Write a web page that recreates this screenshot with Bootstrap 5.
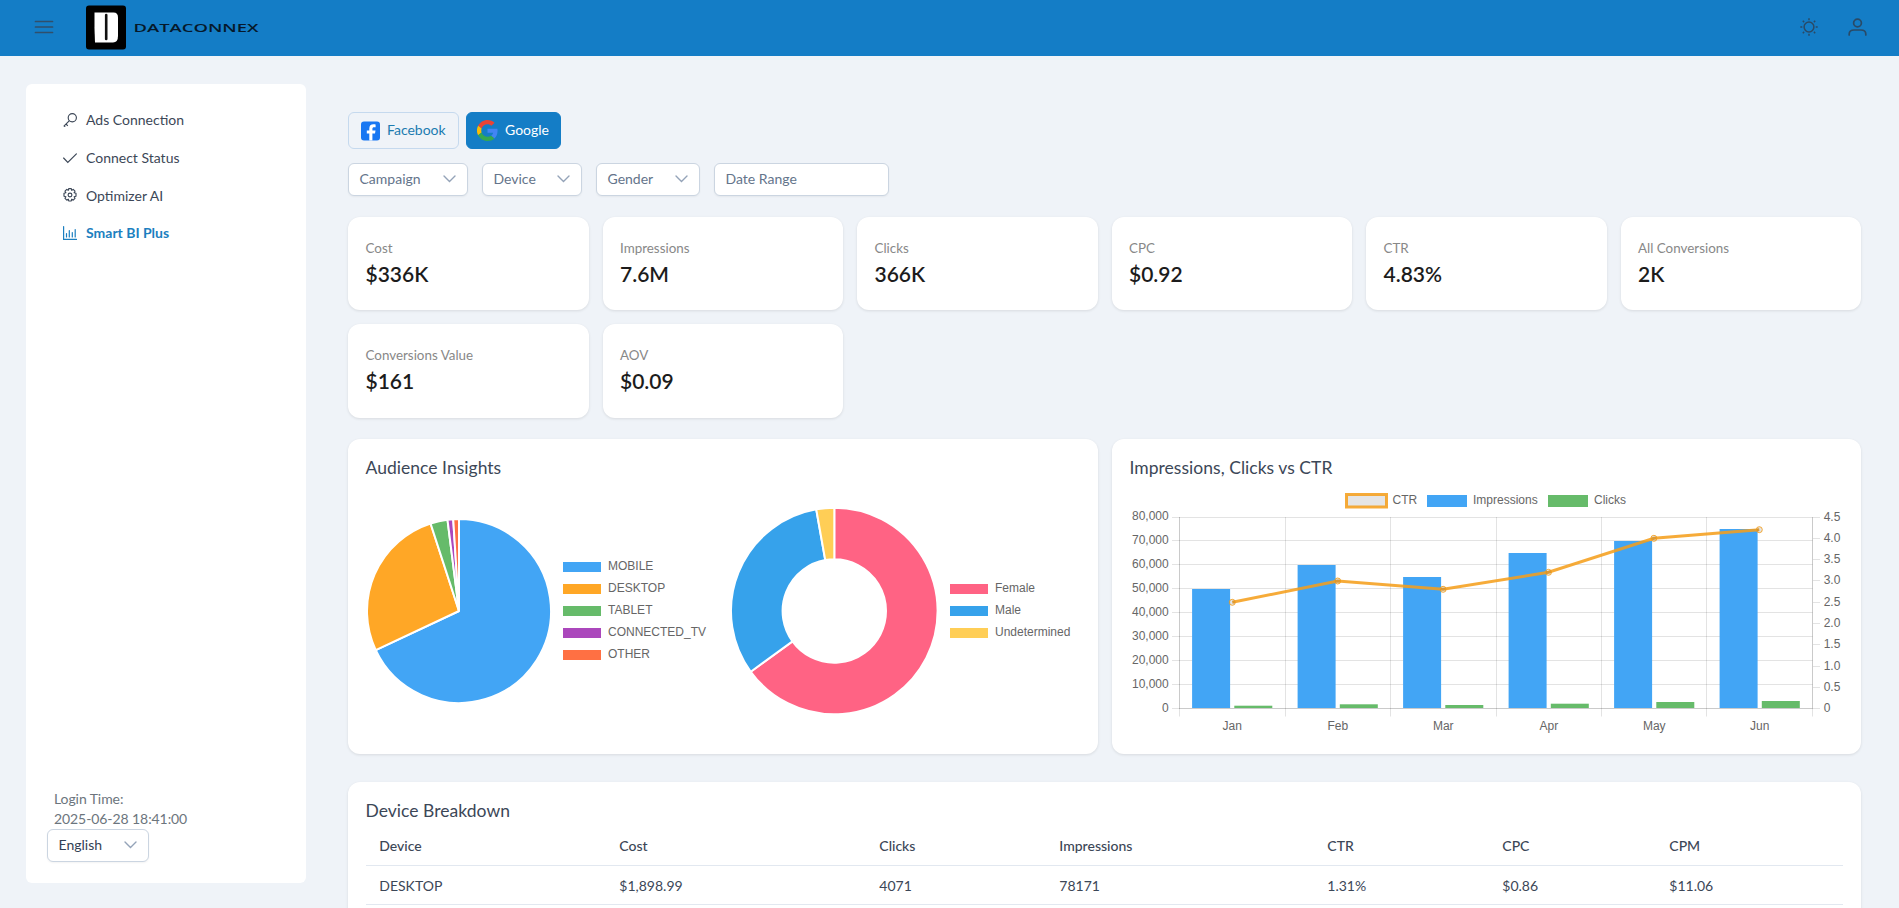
<!DOCTYPE html>
<html lang="en">
<head>
<meta charset="utf-8">
<meta name="viewport" content="width=device-width, initial-scale=1">
<title>DataConnex</title>
<link href="https://cdn.jsdelivr.net/npm/bootstrap@5.3.0/dist/css/bootstrap.min.css" rel="stylesheet">
<style>
  html { font-size: 14px; }
  body { font-family: Lato, "Liberation Sans", sans-serif; font-size: 14px; line-height: 1.5; color: #3c4757; background: #eff3f8; height: 908px; overflow: hidden; }
  .topbar { height: 56px; background: #147dc6; padding: 0 32px 2px 34px; }
  .brand { margin-left: 32px; }
  .side { width: 280px; height: 799px; margin: 28px 0 0 26px; background: #fff; border-radius: 6px; padding: 17px 21px 21px; flex: none; }
  .side .nav-link { height: 37.7px; padding: 0 0 0 16px; color: #3c4757; gap: 9px; }
  .side .nav-link.active { color: #1c7fc0; font-weight: 700; }
  .login { color: #6c757d; line-height: 20px; padding-left: 7px; letter-spacing: -.08px; }
  .main { width: 1513px; margin: 56px 0 0 42px; flex: none; }
  .net { height: 37px; border-radius: 6px; display: flex; align-items: center; border: 1px solid #c5d9ee; color: #1c7bb0; padding: 0; }
  .net.on { background: #147dc6; border-color: #147dc6; color: #fff; }
  .net span { margin: -2px 0 0 7px; }
  .pick { height: 33px; border: 1px solid #cbd5e1; border-radius: 6px; background: #fff; color: #64748b; padding: 0 11px 2px 10.5px; box-shadow: 0 1px 2px rgba(18,18,23,.05); display: flex; align-items: center; justify-content: space-between; }
  .pick svg { fill: none; stroke: #94a3b8; stroke-width: 1.4; stroke-linecap: round; }
  .pick.dark { color: #334155; }
  .panel { background: #fff; border-radius: 12px; box-shadow: 0 1px 3px rgba(0,0,0,.1); padding: 18px 18px 18px 17.5px; }
  .stats { display: grid; grid-template-columns: repeat(6, 1fr); gap: 14px; }
  .stat { height: 93.3px; padding-top: 20px; }
  .stat div { color: #888; font-size: 13.4px; line-height: 22px; }
  .stat b { display: block; font-size: 21px; font-weight: 600; line-height: 30px; color: #1c1c1c; }
  .panel h5 { font-size: 17.5px; font-weight: 400; line-height: 21px; margin: 0; letter-spacing: .03px; }
  .chart { height: 315px; padding-right: 17px; }
  .lab { width: 714px; height: 256px; margin-left: .5px; }
  .lab text { font: 12px "Liberation Sans", sans-serif; fill: #666; }
  .brk { table-layout: fixed; margin: 5px 0 0; color: #3c4757; }
  .brk > :not(caption) > * > * { padding: 1px 0 0 13.8px; height: 39px; vertical-align: middle; border-bottom: 1px solid #e2e8f0; font-weight: 400; background: none; color: inherit; }
  .brk > thead > tr > th { height: 39.5px; padding-top: 0; font-weight: 500; }
</style>
</head>
<body>
<header class="topbar d-flex align-items-center">
  <svg width="20" height="14" fill="none" stroke="#304f6b" stroke-width="1.700" stroke-linecap="round"><path d="M1.500 1.500h17M1.500 7h17M1.500 12.500h17"/></svg>
  <a class="brand" href="#"><svg width="175" height="46" class="d-block">
    <rect x="0" y="1.500" width="40" height="44" rx="3" fill="#000"/>
    <path d="M8.500 8.500H27.500q4.500 0 4.500 5V32q0 6.500-5 6.500H9q-.8-15-.5-30z" fill="#fff"/>
    <path d="M20.200 11V35" stroke="#111" stroke-width="2.600" stroke-linecap="round"/>
    <text transform="translate(47.500 27.800)" textLength="125" lengthAdjust="spacingAndGlyphs" font-family="Open Sans, sans-serif" font-size="10.800" font-weight="600" fill="#06192b">DATACONNEX</text>
  </svg></a>
  <svg class="ms-auto" width="18" height="18" fill="none" stroke="#2a4a66" stroke-width="1.500"><circle cx="9" cy="9" r="4.900"/><path d="M9 .3v2M9 15.700v2M.3 9h2M15.700 9h2M2.800 2.800l1.300 1.300M13.900 13.900l1.300 1.300M2.800 15.200l1.300-1.300M13.900 4.100l1.300-1.300"/></svg>
  <svg class="ms-4" width="28" height="18" viewBox="-9 0 28 18" fill="none" stroke="#2a4a66" stroke-width="1.700" stroke-linecap="round"><circle cx="9.500" cy="5" r="3.900"/><path d="M1.200 17v-1q0-4 5-4h6.600q5 0 5 4v1"/></svg>
</header>
<div class="d-flex">
  <aside class="side d-flex flex-column">
    <nav class="nav flex-column flex-grow-1">
      <a class="nav-link d-flex align-items-center" href="#"><svg width="14" height="14" viewBox="0 0 14 14" fill="none" stroke="currentColor" stroke-width="1.150"><circle cx="9.300" cy="4.700" r="4.100"/><path d="M6.400 7.600.7 13.300M3 11l1.800 1.800M1.200 12.800l1 .9"/></svg>Ads Connection</a>
      <a class="nav-link d-flex align-items-center" href="#"><svg width="14" height="14" viewBox="0 0 14 14" fill="none" stroke="currentColor" stroke-width="1.150" stroke-linecap="round"><path d="M.6 7l4.200 4.500L13.400 2.800"/></svg>Connect Status</a>
      <a class="nav-link d-flex align-items-center" href="#"><svg width="14" height="14" viewBox="0 0 14 14" fill="none" stroke="currentColor" stroke-width="1.150" stroke-linejoin="round"><circle cx="7" cy="7" r="1.900"/><path d="M5.700.6h2.600l.4 1.700 1.500-.9 1.800 1.800-.9 1.500 1.900.6v2.900l-1.900.5.9 1.600-1.800 1.800-1.500-.9-.4 1.800H5.700l-.4-1.800-1.500.9L2 10.300l.9-1.600L1 8.200V5.300l1.900-.6L2 3.200l1.800-1.800 1.500.9z"/></svg>Optimizer AI</a>
      <a class="nav-link active d-flex align-items-center" href="#"><svg width="14" height="14" viewBox="0 0 14 14" fill="none" stroke="currentColor" stroke-width="1.200" stroke-linecap="round"><path d="M.6.6v12.800h13M3.500 7.500v3.500M6.300 4.500V11M9.300 6.500V11M12.200 3.500V11"/></svg>Smart BI Plus</a>
    </nav>
    <div class="login">Login Time:<br>2025-06-28 18:41:00</div>
    <div class="pick dark" style="width:102px"><span>English</span><svg width="13" height="8"><path d="M1 1l5.500 5.500L12 1"/></svg></div>
  </aside>
  <main class="main">
    <div class="d-flex gap-2">
      <button class="btn net" style="width:111px"><svg class="ms-2" width="24" height="20" viewBox="0 0 24 20"><rect x="5" y=".500" width="19" height="19" rx="3" fill="#1877f2"/><path d="M13.300 19.500v-7H10.800V9.400h2.500V7.700c0-3 1.400-4.400 4.300-4.400.8 0 1.500.1 2 .2v2.700h-1.400c-1.400 0-1.800.6-1.800 1.900v1.300h3.100l-.5 3.100h-2.600v7z" fill="#fff"/></svg><span>Facebook</span></button>
      <button class="btn net on" style="width:95px"><svg style="margin-left:10px" width="21" height="21" viewBox="0 0 48 48"><path fill="#EA4335" d="M24 9.500c3.500 0 6.700 1.200 9.200 3.600l6.900-6.900C35.900 2.400 30.500 0 24 0 14.600 0 6.500 5.400 2.600 13.200l8 6.200C12.400 13.700 17.700 9.500 24 9.500z"/><path fill="#4285F4" d="M47 24.500c0-1.600-.2-3.100-.4-4.500H24v9h12.900c-.6 3-2.300 5.500-4.800 7.200l7.700 6C44.400 38 47 31.800 47 24.500z"/><path fill="#FBBC05" d="M10.500 28.600a14.500 14.500 0 010-9.200l-8-6.200a24 24 0 000 21.600z"/><path fill="#34A853" d="M24 48c6.500 0 11.900-2.100 15.900-5.800l-7.700-6c-2.200 1.400-4.900 2.300-8.200 2.300-6.300 0-11.600-4.200-13.500-9.900l-8 6.200C6.500 42.600 14.600 48 24 48z"/></svg><span>Google</span></button>
    </div>
    <div class="d-flex" style="gap:14px;margin:14px 0 21px">
      <div class="pick" style="width:120px"><span>Campaign</span><svg width="13" height="8"><path d="M1 1l5.500 5.500L12 1"/></svg></div>
      <div class="pick" style="width:100px"><span>Device</span><svg width="13" height="8"><path d="M1 1l5.500 5.500L12 1"/></svg></div>
      <div class="pick" style="width:104px"><span>Gender</span><svg width="13" height="8"><path d="M1 1l5.500 5.500L12 1"/></svg></div>
      <div class="pick" style="width:175px">Date Range</div>
    </div>
    <section class="stats">
      <div class="panel stat"><div>Cost</div><b>$336K</b></div>
      <div class="panel stat"><div>Impressions</div><b>7.6M</b></div>
      <div class="panel stat"><div>Clicks</div><b>366K</b></div>
      <div class="panel stat"><div>CPC</div><b>$0.92</b></div>
      <div class="panel stat"><div>CTR</div><b>4.83%</b></div>
      <div class="panel stat"><div>All Conversions</div><b>2K</b></div>
      <div class="panel stat"><div>Conversions Value</div><b>$161</b></div>
      <div class="panel stat"><div>AOV</div><b>$0.09</b></div>
    </section>
    <section class="d-flex" style="gap:14px;margin:21.4px 0 28px">
      <div class="panel chart" style="width:750px"><h5>Audience Insights</h5>
        <svg id="pies" class="lab d-block" viewBox="366 478 714 256"></svg></div>
      <div class="panel chart" style="width:749px"><h5>Impressions, Clicks vs CTR</h5>
        <svg id="combo" class="lab d-block" viewBox="1130 478 714 256"></svg></div>
    </section>
    <section class="panel"><h5>Device Breakdown</h5>
      <table class="table brk">
        <colgroup><col style="width:240px"><col style="width:260px"><col style="width:180px"><col style="width:268px"><col style="width:175px"><col style="width:167px"><col></colgroup>
        <thead><tr><th>Device</th><th>Cost</th><th>Clicks</th><th>Impressions</th><th>CTR</th><th>CPC</th><th>CPM</th></tr></thead>
        <tbody><tr><td>DESKTOP</td><td>$1,898.99</td><td>4071</td><td>78171</td><td>1.31%</td><td>$0.86</td><td>$11.06</td></tr></tbody>
      </table>
    </section>
  </main>
</div>
<script src="https://cdn.jsdelivr.net/npm/bootstrap@5.3.0/dist/js/bootstrap.bundle.min.js"></script>
<script>
const rect = (x, y, w, h, f) => `<rect x="${x}" y="${y}" width="${w}" height="${h}" fill="${f}"/>`;
const text = (x, y, s, a = 'start') => `<text x="${x}" y="${y}" text-anchor="${a}">${s}</text>`;
const line = (x1, y1, x2, y2, o = .11) => `<path d="M${x1} ${y1}L${x2} ${y2}" stroke="#000" stroke-opacity="${o}"/>`;
const amber = 'rgba(245,158,28,.87)';

// Pie / ring: slices run clockwise from twelve o'clock
function round(cx, cy, r, inner, data, lx, ly) {
  let a = 0, out = '';
  const p = (q, t) => `${cx + q * Math.sin(t)} ${cy - q * Math.cos(t)}`;
  data.forEach(([name, v, c], i) => {
    const b = a + v / 100 * 2 * Math.PI, big = v > 50 ? 1 : 0;
    out += `<path fill="${c}" stroke="#fff" stroke-width="2" stroke-linejoin="bevel" d="M${p(r, a)}A${r} ${r} 0 ${big} 1 ${p(r, b)}L${p(inner, b)}` + (inner ? `A${inner} ${inner} 0 ${big} 0 ${p(inner, a)}` : '') + 'Z"/>';
    out += rect(lx, ly + i * 22, 38, 10, c) + text(lx + 45, ly + i * 22 + 8, name);
    a = b;
  });
  return out;
}
document.getElementById('pies').innerHTML =
  round(459, 611, 92, 0, [['MOBILE', 68, '#42a5f5'], ['DESKTOP', 27, '#ffa726'], ['TABLET', 3, '#66bb6a'], ['CONNECTED_TV', 1, '#ab47bc'], ['OTHER', 1, '#ff7043']], 563, 562) +
  round(834.3, 611, 103.3, 51.7, [['Female', 65, '#ff6384'], ['Male', 32.2, '#36a2eb'], ['Undetermined', 2.8, '#ffce56']], 950, 584);

let s = '';
for (let i = 0; i < 9; i++) {
  const y = i ? 516.5 + 24 * i : 517.5;
  s += line(1172, y, 1812.5, y) + text(1168.7, 520 + 24 * i, i < 8 ? (8 - i) + '0,000' : '0', 'end');
}
[517.5, 538.5, 559.5, 580.5, 602.5, 623.5, 644.5, 666.5, 687.5, 708.5].forEach((y, i) => {
  s += line(1813, y, 1820, y) + text(1823.7, Math.round(y + 3), i < 9 ? (4.5 - i / 2).toFixed(1) : '0');
});
[1179.5, 1285.5, 1390.5, 1496.5, 1601.5, 1706.5, 1812.5].forEach(x => s += line(x, 517, x, 716.5));
s += line(1179.5, 517, 1179.5, 708.5) + line(1812.5, 517, 1812.5, 708.5) + line(1179, 708.5, 1813, 708.5);
const blue = [589, 565, 577, 553, 541, 529], green = [705.7, 704.3, 705, 703.7, 702, 701], ctr = [602.3, 581, 589.3, 572.3, 538.3, 529.7];
['Jan', 'Feb', 'Mar', 'Apr', 'May', 'Jun'].forEach((m, i) => {
  const x = 1192.1 + 105.5 * i;
  s += rect(x, blue[i], 38, 708 - blue[i], '#42a5f5') + rect(x + 42.2, green[i], 38, 708 - green[i], '#66bb6a') + text(x + 40.2, 730, m, 'middle');
});
const xs = ctr.map((_, i) => 1232.3 + 105.4 * i);
s += `<polyline fill="none" stroke="${amber}" stroke-width="3" points="${xs.map((x, i) => x + ',' + ctr[i]).join(' ')}"/>`;
xs.forEach((x, i) => s += `<circle cx="${x}" cy="${ctr[i]}" r="3" fill="#000" fill-opacity=".1" stroke="${amber}"/>`);
s += `<rect x="1346.5" y="494.5" width="40" height="12.5" fill="#e5e5e5" stroke="${amber}" stroke-width="3"/>` + text(1392.5, 504, 'CTR')
  + rect(1427, 495, 40, 12, '#42a5f5') + text(1473, 504, 'Impressions') + rect(1548, 495, 40, 12, '#66bb6a') + text(1594, 504, 'Clicks');
document.getElementById('combo').innerHTML = s;
</script>
</body>
</html>
